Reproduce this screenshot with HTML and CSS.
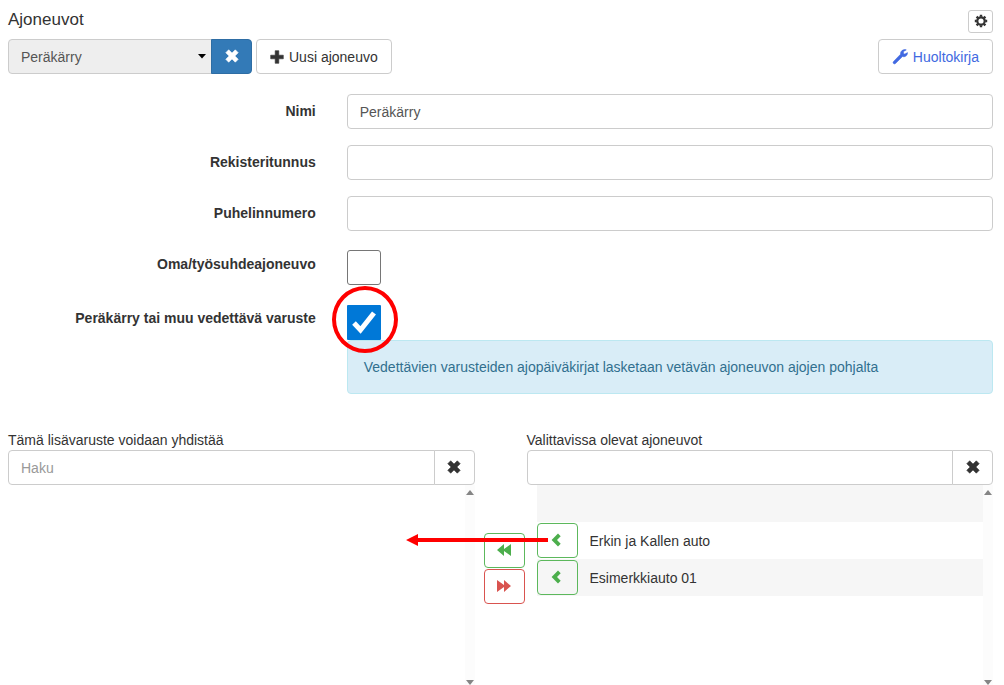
FILE: index.html
```html
<!DOCTYPE html>
<html lang="fi">
<head>
<meta charset="utf-8">
<meta name="viewport" content="width=device-width, initial-scale=1">
<title>Ajoneuvot</title>
<link rel="stylesheet" href="styles.css">
</head>
<body>
<svg class="sprite" aria-hidden="true">
  <symbol id="remove" viewBox="0 0 14 14"><path d="M3.7.8 7 4.1 10.3.8l2.9 2.9L9.9 7l3.3 3.3-2.9 2.9L7 9.9l-3.3 3.3-2.9-2.9L4.1 7 .8 3.7z" stroke="currentColor" stroke-width=".6" stroke-linejoin="round"/></symbol>
  <symbol id="plus" viewBox="0 0 14 14"><path d="M5.2.700h3.600v4.500h4.500v3.600H8.800v4.500H5.200V8.800H.700V5.200h4.500z" stroke="currentColor" stroke-width=".6" stroke-linejoin="round"/></symbol>
  <symbol id="chevron" viewBox="0 0 14 14"><path d="M8 .6 10.700 3.300 7 7l3.700 3.700L8 13.400 1.600 7z"/></symbol>
  <symbol id="backward" viewBox="0 0 14 14"><path d="M7 1v5l7-5v12L7 8v5L0 7z"/></symbol>
  <symbol id="forward" viewBox="0 0 14 14"><path d="M0 1l7 5V1l7 6-7 6V8l-7 5z"/></symbol>
  <symbol id="wrench" viewBox="0 0 16 16"><path d="M14.300.900 11.500 2.500v2l1.300.6 2.700-1.500c.2 1.700-.7 3.300-2.300 3.900-.9.400-1.900.3-2.700 0L3.500 14.500c-.6.600-1.400.6-2 0s-.6-1.400 0-2l7-7.200C8.200 3.200 9.500 1.300 11.500.8c1-.3 2-.3 2.800.1z" stroke="currentColor" stroke-width=".5"/></symbol>
  <symbol id="cog" viewBox="0 0 14 14"><g fill="none" stroke="currentColor"><circle cx="7" cy="7" r="3.700" stroke-width="2.200"/><path stroke-width="2.400" d="M7 .8v2M7 11.200v2M.8 7h2M11.200 7h2M2.600 2.600 4 4M10 10l1.400 1.400M11.400 2.600 10 4M4 10l-1.400 1.400"/></g></symbol>
</svg>

<main class="page">
  <header class="title-row">
    <h1 class="title">Ajoneuvot</h1>
    <button class="btn btn-small" type="button" aria-label="Asetukset"><svg class="icon"><use href="#cog"/></svg></button>
  </header>

  <div class="toolbar">
    <div class="input-group vehicle-picker">
      <div class="select-wrap">
        <select class="control select" aria-label="Ajoneuvo"><option>Peräkärry</option></select>
        <svg class="caret" viewBox="0 0 8 5" aria-hidden="true"><path d="M0 0h8L4 4.500z"/></svg>
      </div>
      <button class="btn btn-primary addon" type="button" aria-label="Tyhjennä valinta"><svg class="icon"><use href="#remove"/></svg></button>
    </div>
    <button class="btn btn-text" type="button"><svg class="icon"><use href="#plus"/></svg>Uusi ajoneuvo</button>
    <a class="btn btn-text btn-link" href="#huoltokirja"><svg class="icon icon-large"><use href="#wrench"/></svg>Huoltokirja</a>
  </div>

  <form class="form">
    <label class="label" for="name">Nimi</label>
    <input class="control" id="name" type="text" value="Peräkärry">
    <label class="label" for="plate">Rekisteritunnus</label>
    <input class="control" id="plate" type="text">
    <label class="label" for="phone">Puhelinnumero</label>
    <input class="control" id="phone" type="text">
    <label class="label" for="own">Oma/työsuhdeajoneuvo</label>
    <div class="own"><div class="check"><input class="checkbox" id="own" type="checkbox"></div></div>
    <label class="label" for="trailer">Peräkärry tai muu vedettävä varuste</label>
    <div class="trailer">
      <div class="check">
        <input class="checkbox" id="trailer" type="checkbox" checked>
        <svg class="tick" viewBox="0 0 34 34" aria-hidden="true"><path d="M7 18l6.500 7L27 8" fill="none" stroke="#fff" stroke-width="5"/></svg>
        <span class="ring"></span>
      </div>
      <p class="info">Vedettävien varusteiden ajopäiväkirjat lasketaan vetävän ajoneuvon ajojen pohjalta</p>
    </div>
  </form>

  <div class="transfer">
    <section class="panel">
      <label class="caption" for="linked">Tämä lisävaruste voidaan yhdistää</label>
      <div class="input-group">
        <input class="control" id="linked" type="text" placeholder="Haku">
        <button class="btn addon" type="button" aria-label="Tyhjennä haku"><svg class="icon"><use href="#remove"/></svg></button>
      </div>
      <div class="list">
        <ul class="items"></ul>
        <div class="scrollbar"><span class="up"></span><span class="down"></span></div>
      </div>
    </section>
    <div class="moves">
      <button class="btn btn-green" type="button" aria-label="Lisää kaikki"><svg class="icon"><use href="#backward"/></svg></button>
      <button class="btn btn-red" type="button" aria-label="Poista kaikki"><svg class="icon"><use href="#forward"/></svg></button>
    </div>
    <section class="panel">
      <label class="caption" for="available">Valittavissa olevat ajoneuvot</label>
      <div class="input-group">
        <input class="control" id="available" type="text">
        <button class="btn addon" type="button" aria-label="Tyhjennä haku"><svg class="icon"><use href="#remove"/></svg></button>
      </div>
      <div class="list">
        <ul class="items items-available">
          <li class="item"></li>
          <li class="item">
            <button class="btn btn-green" type="button" aria-label="Lisää Erkin ja Kallen auto"><svg class="icon"><use href="#chevron"/></svg></button>
            <span>Erkin ja Kallen auto</span>
            <svg class="arrow" viewBox="0 0 142 12" aria-hidden="true"><path d="M0 6 12 0v4h130v4H12v4z"/></svg>
          </li>
          <li class="item">
            <button class="btn btn-green" type="button" aria-label="Lisää Esimerkkiauto 01"><svg class="icon"><use href="#chevron"/></svg></button>
            <span>Esimerkkiauto 01</span>
          </li>
        </ul>
        <div class="scrollbar"><span class="up"></span><span class="down"></span></div>
      </div>
    </section>
  </div>
</main>
</body>
</html>
```

FILE: styles.css
```css
* { box-sizing: border-box; }

body {
  margin: 0;
  background: #fff;
  color: #333;
  font-family: "Liberation Sans", Arial, sans-serif;
  font-size: 14px;
  line-height: 20px;
}

.sprite { position: absolute; width: 0; height: 0; }
.page { padding: 10px 11px 0 8px; }

.icon { width: 14px; height: 14px; fill: currentColor; flex: none; }
.icon-large { width: 16px; height: 16px; }

.title-row { display: flex; align-items: flex-start; justify-content: space-between; }
.title { margin: 0; font-size: 17px; font-weight: 400; line-height: 20px; }

.btn {
  display: inline-flex;
  align-items: center;
  justify-content: center;
  gap: 5px;
  width: 41px;
  height: 35px;
  padding: 0 0 2px;
  border: 1px solid #ccc;
  border-radius: 4px;
  background: #fff;
  color: #333;
  font: inherit;
  text-decoration: none;
  white-space: nowrap;
}
.btn-small { width: 25px; height: 23px; border-radius: 3px; }
.btn-text { width: auto; padding: 0 13px; }
.btn-link { margin-left: auto; color: #4169e1; }
.btn-primary { border-color: #2e6da4; background: #337ab7; color: #fff; }
.btn-green { border-color: #5cb85c; color: #4cae4c; background: transparent; }
.btn-red { border-color: #d9534f; color: #d9534f; }

.control {
  width: 100%;
  min-width: 0;
  height: 35px;
  padding: 0 12px;
  border: 1px solid #ccc;
  border-radius: 4px;
  background: #fff;
  color: #555;
  font: inherit;
}
.control::placeholder { color: #999; opacity: 1; }

.toolbar { display: flex; gap: 4px; margin-top: 6px; }
.input-group { display: flex; }
.input-group .control { border-radius: 4px 0 0 4px; }
.input-group .addon { flex: none; margin-left: -1px; border-radius: 0 4px 4px 0; }
.vehicle-picker { width: 244px; }
.select-wrap { display: grid; flex: 1; align-items: center; }
.select-wrap > * { grid-area: 1 / 1; }
.select { appearance: none; background: #eee; }
.caret { width: 8px; height: 5px; margin-right: 6px; justify-self: end; pointer-events: none; }

.form {
  display: grid;
  grid-template-columns: 1fr 2.1fr;
  gap: 16px 31px;
  margin-top: 20px;
}
.label { padding-top: 7px; font-weight: 700; text-align: right; }
.own { padding-top: 3px; }
.check { position: relative; width: 34px; height: 35px; }
.checkbox {
  display: block;
  appearance: none;
  width: 34px;
  height: 35px;
  margin: 0;
  border: 1px solid #767676;
  border-radius: 3px;
  background: #fff;
}
.checkbox:checked { border: 0; border-radius: 1px; background: #0078d7; }
.tick { position: absolute; inset: 0; width: 34px; height: 34px; pointer-events: none; }
.ring {
  position: absolute;
  inset: -19px -17px -13px -15px;
  z-index: 1;
  border: 4px solid #f00;
  border-radius: 50%;
  pointer-events: none;
}
.trailer { padding-top: 4px; }
.info {
  margin: 0;
  padding: 16px;
  border: 1px solid #bce8f1;
  border-radius: 4px;
  background: #d9edf7;
  color: #31708f;
}

.transfer { display: grid; grid-template-columns: 1fr 52px 1fr; margin-top: 36px; }
.caption { display: block; }
.moves { display: flex; flex-direction: column; gap: 1px; padding: 103px 0 0 9px; }
.list { display: flex; height: 200px; }
.items { flex: 1; margin: 0; padding: 0; list-style: none; }
.items-available { margin-left: 10px; }
.item {
  position: relative;
  display: flex;
  align-items: center;
  gap: 12px;
  height: 37px;
}
.item:nth-child(odd) { background: #f6f6f6; }
.scrollbar {
  display: flex;
  flex-direction: column;
  justify-content: space-between;
  align-items: center;
  width: 10px;
  padding-top: 5px;
  background: #fcfcfc;
}
.up, .down { border: 4px solid transparent; }
.up { border-top: 0; border-bottom: 5px solid #858585; }
.down { border-bottom: 0; border-top: 5px solid #858585; }
.arrow {
  position: absolute;
  left: -131px;
  top: 12px;
  width: 142px;
  height: 12px;
  fill: #f00;
  pointer-events: none;
}
```
